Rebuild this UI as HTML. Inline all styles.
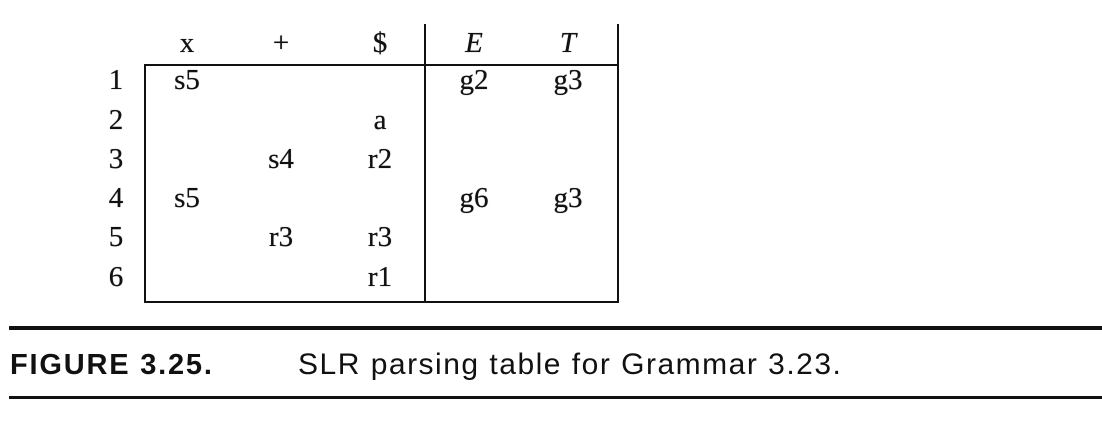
<!DOCTYPE html>
<html><head><style>
html,body{margin:0;padding:0;background:#fff;}
body{width:1102px;height:437px;position:relative;overflow:hidden;font-family:"Liberation Serif",serif;color:#111;}
.t{position:absolute;font-size:29px;line-height:29px;transform:translateX(-50%);white-space:nowrap;text-shadow:0 0 0.6px #111;}
.l{position:absolute;background:#111;}
.cap{position:absolute;font-family:"Liberation Sans",sans-serif;font-size:30px;line-height:30px;top:350px;white-space:nowrap;letter-spacing:1.5px;}
</style></head><body>
<div class="l" style="left:144px;top:64px;width:475px;height:2px"></div>
<div class="l" style="left:144px;top:301px;width:475px;height:2px"></div>
<div class="l" style="left:144px;top:64px;width:2px;height:239px"></div>
<div class="l" style="left:424px;top:24px;width:2px;height:279px"></div>
<div class="l" style="left:617px;top:24px;width:2px;height:279px"></div>
<div class="l" style="left:9px;top:326px;width:1093px;height:4px"></div>
<div class="l" style="left:9px;top:396px;width:1093px;height:3px"></div>

<div class="t" style="left:187px;top:29px">x</div>
<div class="t" style="left:281px;top:29px">+</div>
<div class="t" style="left:380px;top:29px">$</div>
<div class="t" style="left:474px;top:29px;font-style:italic">E</div>
<div class="t" style="left:568px;top:29px;font-style:italic">T</div>

<div class="t" style="left:116px;top:66px">1</div>
<div class="t" style="left:116px;top:106px">2</div>
<div class="t" style="left:116px;top:145px">3</div>
<div class="t" style="left:116px;top:184px">4</div>
<div class="t" style="left:116px;top:223px">5</div>
<div class="t" style="left:116px;top:263px">6</div>

<div class="t" style="left:187px;top:66px">s5</div>
<div class="t" style="left:474px;top:66px">g2</div>
<div class="t" style="left:568px;top:66px">g3</div>
<div class="t" style="left:380px;top:106px">a</div>
<div class="t" style="left:281px;top:145px">s4</div>
<div class="t" style="left:380px;top:145px">r2</div>
<div class="t" style="left:187px;top:184px">s5</div>
<div class="t" style="left:474px;top:184px">g6</div>
<div class="t" style="left:568px;top:184px">g3</div>
<div class="t" style="left:281px;top:223px">r3</div>
<div class="t" style="left:380px;top:223px">r3</div>
<div class="t" style="left:380px;top:263px">r1</div>

<div class="cap" style="left:10px;font-weight:bold;font-size:29px;letter-spacing:1.8px">FIGURE 3.25.</div>
<div class="cap" style="left:298px">SLR parsing table for Grammar 3.23.</div>
</body></html>
